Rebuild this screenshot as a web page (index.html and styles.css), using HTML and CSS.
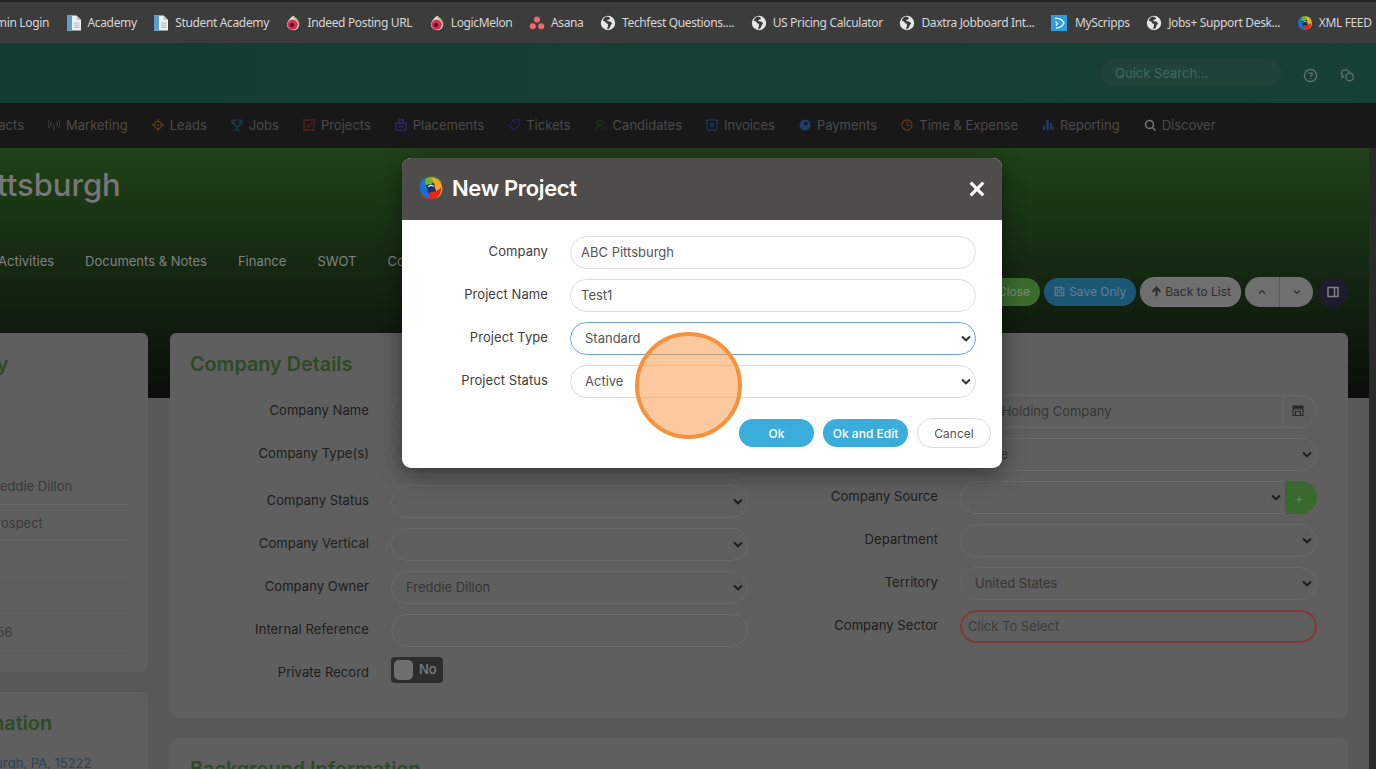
FILE: index.html
```html
<!DOCTYPE html>
<html lang="en">
<head>
<meta charset="utf-8">
<title>New Project</title>
<link rel="stylesheet" href="styles.css">
</head>
<body>
<svg class="defs" width="0" height="0" aria-hidden="true">
  <symbol id="globe" viewBox="0 0 16 16"><circle cx="8" cy="8" r="7.2" fill="#e6e6e6"/><path d="M6 1.4 4.2 3 2.6 5.6 5 6.6l1.6 1.8 1.2.4.3 2-1 2.4.8 1.2 2-1.8.9-2.6 1.4-1.4-2-2-2.4-.3-.7-1.4 2-.3 1-1.4L8.8 2z" fill="#3c3c3c"/></symbol>
  <symbol id="doc" viewBox="0 0 16 16"><path d="M1 .5h9.500L15 5v10.500H1z" fill="#f2f2f2"/><path d="M1 .5h5v15H1z" fill="#5b9bd5"/><path d="M10.500 .5V5H15z" fill="#b9c6d2"/><path d="M8 8h5.500M8 10.200h5.500M8 12.400h5.500" stroke="#a9b4bd" stroke-width="1"/></symbol>
  <symbol id="melon" viewBox="0 0 16 16"><path d="M8 .8C12 3 14 6 14 9.400 14 13 11.400 15.200 8 15.200S2 13 2 9.600C2 6.800 4 4.400 8 .8z" fill="#e8e0d0"/><circle cx="7.600" cy="9.600" r="5.200" fill="#d72f52"/><circle cx="7" cy="10" r="2.300" fill="#6f1029"/><path d="M9 2c3 2 5 4.500 5 8" fill="none" stroke="#7aa66a" stroke-width="1.200"/></symbol>
  <symbol id="asana" viewBox="0 0 16 16"><circle cx="8" cy="4.600" r="3" fill="#f06a6a"/><circle cx="3.800" cy="11.200" r="3" fill="#f06a6a"/><circle cx="12.200" cy="11.200" r="3" fill="#f06a6a"/></symbol>
  <symbol id="scripps" viewBox="0 0 16 16"><path d="M0 0h16v16H0z" fill="#2d9ee0"/><path d="M4 3.500c4-.8 8 1.500 9 4.500-1.500 3-4 5-8 5M4.500 6.500l2 2-1.500 2" fill="none" stroke="#eaf7ff" stroke-width="1.400"/></symbol>
  <symbol id="logo" viewBox="0 0 24 24">
    <circle cx="12" cy="12" r="6" fill="#1b2f66"/>
    <path d="M12 8.500C8.500 8.500 5 9.500 2.800 12.500 2 6.500 6.500 1.500 12.500 1.500c4 0 7.300 2 9 5.500C18.500 6 15 6.500 12 8.500z" fill="#6ab52e"/>
    <path transform="rotate(90 12 12)" d="M12 8.500C8.500 8.500 5 9.500 2.800 12.500 2 6.500 6.500 1.500 12.500 1.500c4 0 7.300 2 9 5.500C18.500 6 15 6.500 12 8.500z" fill="#f5a421"/>
    <path transform="rotate(180 12 12)" d="M12 8.500C8.500 8.500 5 9.500 2.800 12.500 2 6.500 6.500 1.500 12.500 1.500c4 0 7.300 2 9 5.500C18.500 6 15 6.500 12 8.500z" fill="#e2261c"/>
    <path transform="rotate(270 12 12)" d="M12 8.500C8.500 8.500 5 9.500 2.800 12.500 2 6.500 6.500 1.500 12.500 1.500c4 0 7.300 2 9 5.500C18.500 6 15 6.500 12 8.500z" fill="#1a6fd2"/>
    <path d="M9.500 11c1-1.600 3.500-2 5-.5" fill="none" stroke="#eef3f6" stroke-width="1"/>
  </symbol>
</svg>

<div class="bookmarks">
  <span class="bm bm-first">Admin Login</span>
  <span class="bm"><svg class="bi"><use href="#doc"/></svg>Academy</span>
  <span class="bm"><svg class="bi"><use href="#doc"/></svg>Student Academy</span>
  <span class="bm"><svg class="bi"><use href="#melon"/></svg>Indeed Posting URL</span>
  <span class="bm"><svg class="bi"><use href="#melon"/></svg>LogicMelon</span>
  <span class="bm"><svg class="bi"><use href="#asana"/></svg>Asana</span>
  <span class="bm"><svg class="bi"><use href="#globe"/></svg>Techfest Questions....</span>
  <span class="bm"><svg class="bi"><use href="#globe"/></svg>US Pricing Calculator</span>
  <span class="bm"><svg class="bi"><use href="#globe"/></svg>Daxtra Jobboard Int...</span>
  <span class="bm bm-wide"><svg class="bi"><use href="#scripps"/></svg>MyScripps</span>
  <span class="bm"><svg class="bi"><use href="#globe"/></svg>Jobs+ Support Desk...</span>
  <span class="bm"><svg class="bi"><use href="#logo"/></svg>XML FEED</span>
</div>

<div class="app">
  <header class="topbar">
    <div class="search">Quick Search...</div>
    <svg class="top-ico" viewBox="0 0 16 16"><circle cx="8" cy="8" r="6.500" fill="none" stroke="currentColor" stroke-width="1.400"/><path d="M6 6.300C6 4.800 10 4.600 10 6.500 10 8 8 7.800 8 9.400M8 11v1" fill="none" stroke="currentColor" stroke-width="1.400"/></svg>
    <svg class="top-ico" viewBox="0 0 16 16"><path d="M10 5.500C10 3.500 8 2 5.800 2 3.500 2 1.500 3.500 1.500 5.600c0 1 .5 1.900 1.200 2.500L2.300 10l2-1" fill="none" stroke="currentColor" stroke-width="1.400"/><circle cx="10.200" cy="9.500" r="4" fill="none" stroke="currentColor" stroke-width="1.400"/></svg>
  </header>

  <nav class="nav">
    <span class="nav-item nav-first">Contacts</span>
    <span class="nav-item"><svg class="ni c-grey" viewBox="0 0 12 12"><path d="M6 4.500v7M3.500 2.500a3.500 3.500 0 0 0 0 5M8.500 2.500a3.500 3.500 0 0 1 0 5M1.500 1a6 6 0 0 0 0 8M10.500 1a6 6 0 0 1 0 8" fill="none" stroke="currentColor"/></svg>Marketing</span>
    <span class="nav-item"><svg class="ni c-orange" viewBox="0 0 12 12"><circle cx="6" cy="6" r="3.500" fill="none" stroke="currentColor" stroke-width="1.300"/><circle cx="6" cy="6" r="1" fill="currentColor"/><path d="M6 0v2.500M6 9.500V12M0 6h2.500M9.500 6H12" stroke="currentColor" stroke-width="1.300"/></svg>Leads</span>
    <span class="nav-item"><svg class="ni c-teal" viewBox="0 0 12 12"><path d="M3 1h6v3.500a3 3 0 0 1-6 0zM6 7.500V10M3.500 11h5M3 2H.8c0 2 1 3 2.400 3.400M9 2h2.200c0 2-1 3-2.400 3.400" fill="none" stroke="currentColor" stroke-width="1.500"/></svg>Jobs</span>
    <span class="nav-item"><svg class="ni c-red" viewBox="0 0 12 12"><path d="M1 1h10v10H1zM3.500 6l2 2 3-4" fill="none" stroke="currentColor" stroke-width="1.300"/></svg>Projects</span>
    <span class="nav-item"><svg class="ni c-purple" viewBox="0 0 12 12"><path d="M1 4h10v7.500H1zM4 4V.8h4V4M3 7.500h6" fill="none" stroke="currentColor" stroke-width="1.500"/></svg>Placements</span>
    <span class="nav-item"><svg class="ni c-violet" viewBox="0 0 12 12"><path d="M6 .8h5.200V6L6 11.200.8 6z" fill="none" stroke="currentColor" stroke-width="1.300"/><circle cx="8" cy="4" r="1" fill="currentColor"/></svg>Tickets</span>
    <span class="nav-item"><svg class="ni c-green" viewBox="0 0 12 12"><circle cx="4.500" cy="3.500" r="2.300" fill="none" stroke="currentColor"/><path d="M.5 11c0-3 1.500-4 4-4s4 1 4 4M8 1.500c2 .3 2 3.500 0 4M9.500 7.300c1.500.5 2 1.700 2 3.700" fill="none" stroke="currentColor"/></svg>Candidates</span>
    <span class="nav-item"><svg class="ni c-blue" viewBox="0 0 12 12"><path d="M1 1h10v10H1z" fill="none" stroke="currentColor" stroke-width="1.300"/><path d="M4 4h4v4H4z" fill="currentColor"/></svg>Invoices</span>
    <span class="nav-item"><svg class="ni c-sky" viewBox="0 0 12 12"><circle cx="6" cy="6" r="5.500" fill="currentColor"/><circle cx="7" cy="4.500" r="1.800" fill="#282828"/></svg>Payments</span>
    <span class="nav-item"><svg class="ni c-amber" viewBox="0 0 12 12"><circle cx="6" cy="6" r="5" fill="none" stroke="currentColor" stroke-width="1.300"/><path d="M6 3v3.300h2.500" fill="none" stroke="currentColor" stroke-width="1.200"/></svg>Time &amp; Expense</span>
    <span class="nav-item"><svg class="ni c-sky" viewBox="0 0 12 12"><path d="M1 6.500h2V11H1zM4.500 1h2.200v10H4.500zM8 4h1.800v7H8zM10.500 7.500H12V11h-1.500z" fill="currentColor"/></svg>Reporting</span>
    <span class="nav-item"><svg class="ni c-light" viewBox="0 0 12 12"><circle cx="5.500" cy="5.500" r="4" fill="none" stroke="currentColor" stroke-width="1.500"/><path d="m8.500 8.500 3 3" stroke="currentColor" stroke-width="1.500"/></svg>Discover</span>
  </nav>

  <div class="stage">
    <main class="page">
      <h1 class="title">ABC Pittsburgh</h1>
      <div class="tabs">
        <span class="tab">Activities</span>
        <span class="tab">Documents &amp; Notes</span>
        <span class="tab">Finance</span>
        <span class="tab">SWOT</span>
        <span class="tab">Contacts</span>
      </div>
      <div class="actions">
        <button class="act act-green">Save &amp; Close</button>
        <button class="act act-blue"><svg class="ai" viewBox="0 0 14 14"><path d="M1.500 1.500h9l2 2v9h-11zM4 1.500V5h5.500V1.500M4 12.500V8h6v4.500" fill="none" stroke="currentColor" stroke-width="1.300"/></svg>Save Only</button>
        <button class="act act-grey"><svg class="ai" viewBox="0 0 14 14"><path d="M7 13V3M2 7.500 7 2l5 5.500" fill="none" stroke="currentColor" stroke-width="2.600"/></svg>Back to List</button>
        <div class="updown">
          <button class="ud"><svg class="ci" viewBox="0 0 10 6"><path d="m2 4.500 3-3 3 3" fill="none" stroke="currentColor" stroke-width="1.200"/></svg></button>
          <button class="ud"><svg class="ci" viewBox="0 0 10 6"><path d="m2 1.500 3 3 3-3" fill="none" stroke="currentColor" stroke-width="1.200"/></svg></button>
        </div>
        <button class="panel-btn"><svg class="pi" viewBox="0 0 12 12"><path d="M1 1.500h10v9H1zM7.500 1.500v9" fill="none" stroke="currentColor" stroke-width="1.500"/></svg></button>
      </div>

      <div class="content">
        <aside class="side">
          <section class="card card-sum">
            <h2 class="card-h">Company Summary</h2>
            <ul class="facts">
              <li class="fact">Freddie Dillon</li>
              <li class="fact">Prospect</li>
              <li class="fact"></li>
              <li class="fact"></li>
              <li class="fact">456</li>
            </ul>
          </section>
          <section class="card card-info">
            <h2 class="card-h card-h-shift">Contact Information</h2>
            <p class="addr">Pittsburgh, PA, 15222</p>
          </section>
        </aside>
        <div class="mainc">
          <section class="card card-details">
            <h2 class="card-h">Company Details</h2>
            <div class="form">
              <div class="col col-l">
                <div class="row"><label class="lab">Company Name</label><input class="fld" value="ABC Pittsburgh"></div>
                <div class="row row-tall"><label class="lab">Company Type(s)</label><input class="fld" value=""></div>
                <div class="row"><label class="lab">Company Status</label><select class="fld sel"><option></option></select></div>
                <div class="row"><label class="lab">Company Vertical</label><select class="fld sel"><option></option></select></div>
                <div class="row"><label class="lab">Company Owner</label><select class="fld sel"><option>Freddie Dillon</option></select></div>
                <div class="row"><label class="lab">Internal Reference</label><input class="fld" value=""></div>
                <div class="row row-toggle"><label class="lab">Private Record</label><span class="toggle"><i class="knob"></i>No</span></div>
              </div>
              <div class="col col-r">
                <div class="row"><label class="lab">Parent Company</label><span class="group"><input class="fld fld-grp" value="ABC Holding Company"><span class="addon"><svg class="cal" viewBox="0 0 12 12"><path d="M1 2h10v9.500H1zM1 5h10M3.500 7.500h5v4h-5z" fill="none" stroke="currentColor" stroke-width="1.100"/><path d="M1 2h10v2.500H1z" fill="currentColor"/></svg></span></span></div>
                <div class="row"><label class="lab">Company Size</label><select class="fld sel"><option>None</option></select></div>
                <div class="row"><label class="lab">Company Source</label><span class="group"><select class="fld sel fld-grp2"><option></option></select><button class="plus">+</button></span></div>
                <div class="row"><label class="lab">Department</label><select class="fld sel"><option></option></select></div>
                <div class="row"><label class="lab">Territory</label><select class="fld sel"><option>United States</option></select></div>
                <div class="row"><label class="lab">Company Sector</label><input class="fld fld-err" placeholder="Click To Select"></div>
              </div>
            </div>
          </section>
          <section class="card card-bg">
            <h2 class="card-h">Background Information</h2>
          </section>
        </div>
      </div>
    </main>
    <div class="scrollbar"></div>
  </div>

  <div class="backdrop"></div>

  <div class="modal">
    <div class="modal-head">
      <svg class="modal-logo"><use href="#logo"/></svg>
      <span class="modal-title">New Project</span>
      <svg class="modal-x" viewBox="0 0 14 14"><path d="m1.500 1.500 11 11M12.500 1.500l-11 11" stroke="#fff" stroke-width="2.800"/></svg>
    </div>
    <div class="modal-body">
      <div class="mrow"><label class="mlab">Company</label><input class="mfld" value="ABC Pittsburgh"></div>
      <div class="mrow"><label class="mlab">Project Name</label><input class="mfld" value="Test1"></div>
      <div class="mrow"><label class="mlab">Project Type</label><select class="mfld msel mfocus"><option>Standard</option></select></div>
      <div class="mrow"><label class="mlab">Project Status</label><select class="mfld msel"><option>Active</option></select></div>
      <div class="mfoot">
        <button class="mbtn mbtn-ok">Ok</button>
        <button class="mbtn mbtn-edit">Ok and Edit</button>
        <button class="mbtn mbtn-cancel">Cancel</button>
      </div>
    </div>
  </div>

  <div class="spot"></div>
</div>
</body>
</html>
```

FILE: styles.css
```css
* { box-sizing: border-box; }
html, body { margin: 0; padding: 0; }
body {
  width: 1376px;
  height: 769px;
  overflow: hidden;
  background: #3c3c3c;
  font-family: Inter, "Liberation Sans", sans-serif;
  font-size: 13px;
}
.defs { position: absolute; }
button, input, select { font-family: inherit; font-size: 13px; }

/* bookmarks bar */
.bookmarks {
  height: 43px;
  background: #3c3c3c;
  border-top: 2px solid #232323;
  display: flex;
  align-items: center;
  gap: 16.500px;
  font-family: "Noto Sans", sans-serif;
  font-size: 12px;
  letter-spacing: -.35px;
  color: #d6d6d6;
  white-space: nowrap;
  overflow: hidden;
}
.bm { display: inline-flex; align-items: center; gap: 6px; flex: none; }
.bm-first { margin-left: -18.500px; }
.bm-wide { gap: 8px; }
.bi { width: 16px; height: 16px; flex: none; }

/* app, dimmed underneath */
.app { position: relative; height: 726px; overflow: hidden; }
.backdrop { position: absolute; inset: 0; background: rgba(0, 0, 0, .4); }

.topbar {
  height: 60px;
  background: linear-gradient(90deg, #216454, #266d5a);
  display: flex;
  align-items: center;
  padding-right: 21px;
  color: #a2c0b6;
}
.search {
  width: 180px;
  height: 28px;
  margin-left: auto;
  margin-top: -1px;
  border-radius: 14px;
  background: #357060;
  color: #6ab19f;
  line-height: 28px;
  padding-left: 14px;
}
.top-ico { width: 15px; height: 15px; margin-left: 22px; margin-top: 4px; }

.nav {
  height: 45px;
  background: #282828;
  display: flex;
  align-items: center;
  gap: 24px;
  padding-bottom: 2px;
  color: #7c7c7c;
  white-space: nowrap;
}
.nav-item { display: inline-flex; align-items: center; gap: 6px; flex: none; }
.nav-first { margin-left: -31px; }
.ni { width: 12px; height: 12px; flex: none; }
.c-grey { color: #6e6e6e; }
.c-orange { color: #a06c15; }
.c-teal { color: #236078; }
.c-red { color: #8e3828; }
.c-purple { color: #4c3da0; }
.c-violet { color: #433688; }
.c-green { color: #28692d; }
.c-blue { color: #295395; }
.c-sky { color: #2f69b8; }
.c-amber { color: #a05a20; }
.c-light { color: #c8c8c8; }

/* page */
.stage { display: flex; height: 621px; }
.page {
  width: 1369px;
  flex: none;
  overflow: hidden;
  background: linear-gradient(180deg, #346e2a 0, #111711 250px, #939393 250px);
}
.scrollbar { flex: 1; background: #474747; }
.title {
  margin: 17px 0 0 -104px;
  font-size: 31px;
  line-height: 40px;
  font-weight: 500;
  color: #c6c6c6;
  white-space: nowrap;
}
.tabs {
  display: flex;
  gap: 31px;
  margin: 46px 0 0 -2px;
  line-height: 20px;
  color: #d5d5d5;
  white-space: nowrap;
}
.actions {
  display: flex;
  justify-content: flex-end;
  align-items: center;
  gap: 4px;
  height: 30px;
  margin-top: 6px;
  padding-right: 21px;
}
.act {
  height: 28px;
  border: 0;
  border-radius: 14px;
  padding: 0 10px 1px;
  display: inline-flex;
  align-items: center;
  gap: 4px;
  font-size: 12px;
  white-space: nowrap;
}
.act-green { background: #62b44f; color: #c4ecb8; }
.act-blue { background: #2f8fc4; color: #a8d2ea; }
.act-grey { height: 30px; background: #b9b9b9; color: #4d4d4d; border: 1px solid #c4c4c4; padding: 0 9px 1px 10px; gap: 3px; }
.ai { width: 11px; height: 11px; flex: none; }
.updown { display: flex; height: 30px; border-radius: 15px; overflow: hidden; background: #b9b9b9; }
.ud { width: 34px; border: 0; background: transparent; color: #4d4d4d; display: flex; align-items: center; justify-content: center; padding: 0; }
.ud + .ud { border-left: 1px solid #999; }
.ci { width: 10px; height: 6px; }
.panel-btn { width: 30px; height: 30px; margin-left: 1px; border-radius: 50%; border: 0; background: #2f2f4d; color: #d6d6d6; display: flex; align-items: center; justify-content: center; padding: 0; }
.pi { width: 12px; height: 12px; }

.content {
  display: flex;
  gap: 22px;
  margin-top: 26px;
  margin-left: -200px;
  width: 1548px;
}
.side { width: 348px; flex: none; display: flex; flex-direction: column; gap: 20px; }
.mainc { width: 1178px; flex: none; display: flex; flex-direction: column; gap: 20px; }
.card { background: #9e9e9e; border-radius: 6px; padding: 19px 20px; }
.card-h {
  margin: 0;
  font-size: 19.800px;
  line-height: 24px;
  font-weight: 600;
  color: #4a7c40;
  white-space: nowrap;
}
.card-h-shift { margin-left: 41px; }
.card-sum { height: 339px; }
.facts { list-style: none; margin: 92px 0 0 168px; padding: 0; color: #5f5f5f; }
.fact { height: 36.500px; line-height: 36px; border-bottom: 1px solid #a8a8a8; white-space: nowrap; }
.card-info { flex: 1; }
.addr { margin: 20px 0 0 141px; color: #4a6e90; white-space: nowrap; }
.card-details { height: 385px; padding: 19px 0 0; }
.card-details .card-h { margin-left: 20px; }
.card-bg { height: 120px; }
.form { display: flex; margin-top: 19px; }
.col { display: flex; flex-direction: column; gap: 10px; }
.col-l { width: 578px; }
.col-l .lab { width: 199px; margin-right: 22px; }
.col-r { width: 569px; }
.col-r .lab { width: 190px; margin-right: 22px; }
.row { display: flex; height: 33px; }
.row-tall { height: 37px; }
.row-toggle { height: 26px; }
.lab { text-align: right; line-height: 30px; letter-spacing: .08px; color: #323232; flex: none; white-space: nowrap; }
.fld {
  width: 357px;
  height: 33px;
  border: 1px solid #aeaeae;
  border-radius: 16.500px;
  background: transparent;
  color: #5a5a5a;
  padding: 0 10px 2px;
  outline: 0;
}
.row-tall .fld { height: 37px; }
.fld-err { border: 2px solid #d8625e; padding-left: 6px; }
.fld-err::placeholder { color: #656565; opacity: 1; }
.group { display: flex; width: 357px; }
.fld-grp { flex: 1; width: auto; min-width: 0; border-right: 0; border-radius: 16.500px 0 0 16.500px; }
.addon { width: 34px; border: 1px solid #aeaeae; border-radius: 0 16.500px 16.500px 0; color: #444; display: flex; align-items: center; justify-content: center; padding: 0 4px 3px 0; }
.cal { width: 12px; height: 12px; }
.fld-grp2 { flex: 1; width: auto; min-width: 0; border-right: 0; border-radius: 16.500px 0 0 16.500px; }
.plus { width: 32px; border: 0; border-radius: 0 16.500px 16.500px 0; background: #5fb04e; color: #a8dc9b; padding: 0 4px 0 0; font-size: 14px; }
.toggle { display: flex; align-items: center; gap: 6px; width: 52px; height: 26px; border-radius: 4px; background: #4c4c4c; color: #d0d0d0; font-weight: 500; font-size: 13px; padding: 0 0 2px 3px; }
.knob { width: 19px; height: 20px; margin-top: 2px; border-radius: 5px; background: #b8b8b8; }

/* modal */
.modal {
  position: absolute;
  left: 402px;
  top: 115px;
  width: 600px;
  height: 310px;
  background: #fff;
  border-radius: 9px;
  overflow: hidden;
  box-shadow: 0 6px 22px rgba(0, 0, 0, .45);
}
.modal-head {
  height: 62px;
  background: #4f4d4b;
  display: flex;
  align-items: center;
  padding: 0 17px 2px 16px;
}
.modal-logo { width: 26px; height: 26px; flex: none; }
.modal-title { margin-left: 8px; font-size: 22px; font-weight: 600; color: #fff; letter-spacing: -.35px; }
.modal-x { width: 16px; height: 16px; margin-left: auto; margin-top: 2px; }
.modal-body { padding-top: 16px; display: flex; flex-direction: column; gap: 10px; }
.mrow { display: flex; height: 33px; }
.mlab { width: 146px; margin-right: 22px; text-align: right; line-height: 30px; letter-spacing: .08px; color: #3d3d3d; flex: none; }
.mfld {
  width: 406px;
  height: 33px;
  border: 1px solid #dcdcdc;
  border-radius: 16.500px;
  background-color: #fff;
  color: #555;
  padding: 0 10px 2px;
  outline: 0;
}
.sel, .msel {
  appearance: none;
  padding-left: 14px;
  background-image: url("data:image/svg+xml,%3Csvg xmlns='http://www.w3.org/2000/svg' width='10' height='7'%3E%3Cpath d='M1 1.500 5 5.300 9 1.500' fill='none' stroke='%23333' stroke-width='2'/%3E%3C/svg%3E");
  background-repeat: no-repeat;
  background-position: right 4px center;
}
.mfocus { border-color: #6ba4c4; }
.mfoot { display: flex; justify-content: flex-end; align-items: center; gap: 9px; margin-top: 10px; padding-right: 11px; }
.mbtn { height: 28px; border: 0; border-radius: 14px; padding: 0; color: #fff; font-size: 12px; font-weight: 500; }
.mbtn-ok { width: 75px; background: #3badda; }
.mbtn-edit { width: 85px; background: #3badda; }
.mbtn-cancel { width: 74px; height: 30px; border-radius: 15px; background: #fff; border: 1px solid #dcdcdc; color: #555; font-weight: 400; }

.spot {
  position: absolute;
  left: 635px;
  top: 289px;
  width: 107px;
  height: 107px;
  border-radius: 50%;
  border: 4px solid #f6923d;
  background: rgba(249, 146, 60, .5);
}
```
